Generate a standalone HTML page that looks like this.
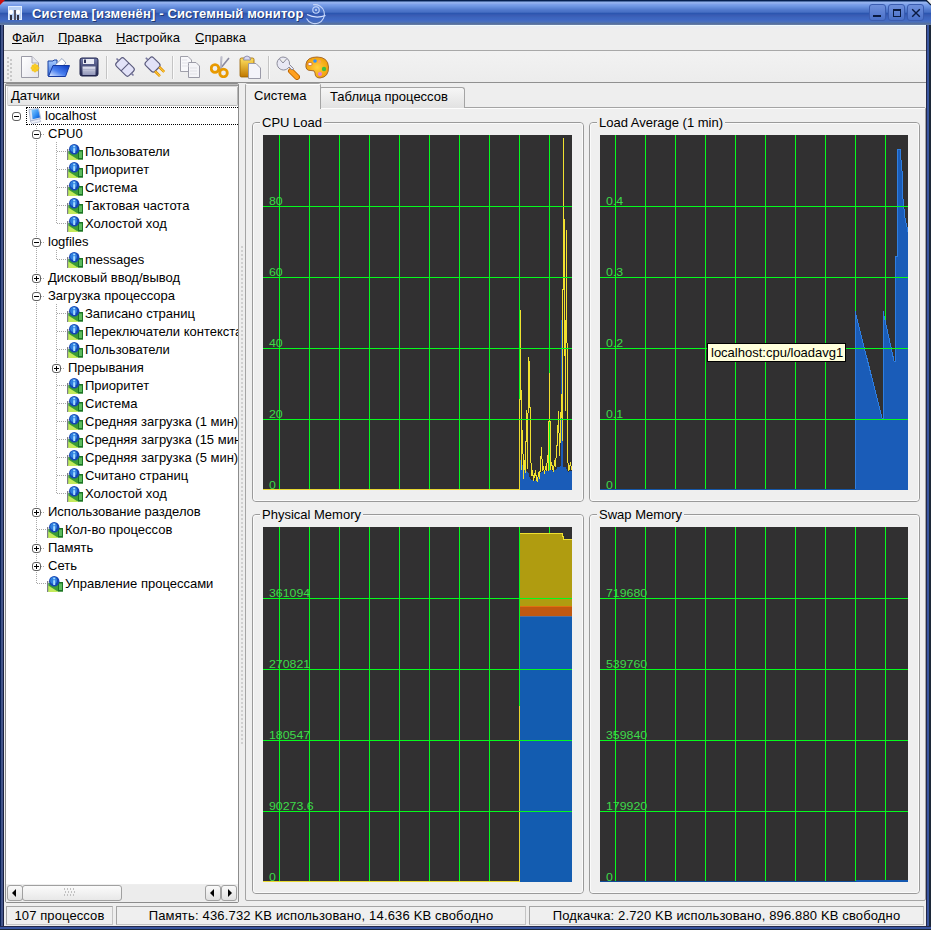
<!DOCTYPE html>
<html><head><meta charset="utf-8"><title>ksysguard</title>
<style>
*{box-sizing:border-box}
html,body{margin:0;padding:0}
body{width:931px;height:930px;overflow:hidden;position:relative;background:#1b3c8c;font-family:"Liberation Sans",sans-serif;font-size:13px;color:#000}
.a{position:absolute}
.t{position:absolute;white-space:nowrap;line-height:16px}
</style></head><body>

<div class="a" style="left:0;top:0;width:931px;height:25px;background:linear-gradient(#062050 0px,#062050 1px,#5070a8 1px,#5070a8 2px,#98b4ee 2px,#8cacec 3.5px,#7da0ea 4.5px,#7098e4 6px,#6088d8 8px,#5078cc 10px,#4870c4 12px,#2c56b0 13.5px,#3a5cb4 15.5px,#3c64bc 17.5px,#4068c4 20px,#4a70bc 22px,#5570a0 23.5px,#6a80a8 25px);border-radius:5px 5px 0 0"></div>
<svg class="a" style="left:0;top:0" width="6" height="6"><path d="M0 0 H5 L0 5 Z" fill="#c81010"/></svg>
<svg class="a" style="left:925px;top:0" width="6" height="6"><path d="M1 0 H6 V5 Z" fill="#f0f0f0"/><path d="M1 0 L6 5" stroke="#0a1a30" stroke-width="1.2"/></svg>
<div class="a" style="left:8px;top:6px;width:14px;height:14px;background:#b8d0f4;border:1px solid #e0ecff"></div>
<svg class="a" style="left:7px;top:6px" width="15" height="15"><circle cx="4" cy="6" r="2.2" fill="#fff"/><circle cx="11" cy="6" r="2.2" fill="#fff"/><rect x="3" y="9" width="2" height="5" fill="#334"/><rect x="7" y="4" width="2" height="10" fill="#556"/><rect x="10" y="9" width="2" height="5" fill="#334"/></svg>
<div class="t" style="left:32px;top:6px;font-weight:bold;font-size:13px;color:#fff;text-shadow:1px 1px 0 #203870;letter-spacing:0.15px">Система [изменён] - Системный монитор</div>
<svg class="a" style="left:302px;top:2px" width="26" height="24"><path d="M11 2.8 A9.5 9.5 0 1 1 4.5 16.5" fill="none" stroke="#c4d4f8" stroke-width="1.1"/><circle cx="14" cy="8" r="3.2" fill="none" stroke="#c8d8fc" stroke-width="1.1"/><circle cx="14" cy="8" r="1" fill="#c8d8fc"/><path d="M5 12.5 Q14 17 23.5 13.5" fill="none" stroke="#d4e0ff" stroke-width="1.2"/></svg>
<div class="a" style="left:869px;top:4px;width:17px;height:17px;border:1px solid #3a5cb0;border-radius:3px;background:linear-gradient(#6f90dc,#4a70c8)"></div>
<div class="a" style="left:888px;top:4px;width:17px;height:17px;border:1px solid #3a5cb0;border-radius:3px;background:linear-gradient(#6f90dc,#4a70c8)"></div>
<div class="a" style="left:907px;top:4px;width:17px;height:17px;border:1px solid #3a5cb0;border-radius:3px;background:linear-gradient(#6f90dc,#4a70c8)"></div>
<div class="a" style="left:873px;top:15px;width:8px;height:2px;background:#0a1a40"></div>
<div class="a" style="left:893px;top:9px;width:8px;height:8px;border:1px solid #0a1a40;border-top-width:2px"></div>
<svg class="a" style="left:907px;top:4px" width="17" height="17"><path d="M5.2 5.2 L12.8 12.8 M12.8 5.2 L5.2 12.8" stroke="#0a1a40" stroke-width="1.4"/></svg>
<div class="a" style="left:0;top:25px;width:4px;height:905px;background:linear-gradient(90deg,#0a2258 0 1px,#42548a 1px 3px,#1a2040 3px 4px)"></div>
<div class="a" style="left:926px;top:25px;width:5px;height:905px;background:linear-gradient(90deg,#24284a 0 1px,#3a56a0 1px 3px,#1c2838 3px 5px)"></div>
<div class="a" style="left:0;top:926px;width:931px;height:4px;background:linear-gradient(#24284a 0 1px,#3a56a0 1px 3px,#1c2838 3px 4px)"></div>
<div class="a" style="left:4px;top:25px;width:922px;height:901px;background:#eeeeee"></div>
<div class="a" style="left:4px;top:25px;width:922px;height:25px;background:linear-gradient(#f0fbff 0px,#f0fbff 1px,#e8ecf4 1px,#eeeeee 4px,#eeeeee)"></div>
<div class="a" style="left:4px;top:50px;width:922px;height:1px;background:#a8a8a8"></div>
<div class="t" style="left:12px;top:30px">Файл</div>
<div class="a" style="left:12px;top:43px;width:10px;height:1px;background:#000"></div>
<div class="t" style="left:58px;top:30px">Правка</div>
<div class="a" style="left:58px;top:43px;width:9px;height:1px;background:#000"></div>
<div class="t" style="left:116px;top:30px">Настройка</div>
<div class="a" style="left:116px;top:43px;width:10px;height:1px;background:#000"></div>
<div class="t" style="left:195px;top:30px">Справка</div>
<div class="a" style="left:195px;top:43px;width:9px;height:1px;background:#000"></div>
<div class="a" style="left:4px;top:51px;width:922px;height:32px;background:linear-gradient(#f2f2f2,#ececec)"></div>
<div class="a" style="left:4px;top:82px;width:922px;height:1px;background:#909090"></div>
<div class="a" style="left:7px;top:57px;width:2px;height:2px;background:#c8c8c8"></div>
<div class="a" style="left:10px;top:59px;width:2px;height:2px;background:#c8c8c8"></div>
<div class="a" style="left:7px;top:61px;width:2px;height:2px;background:#c8c8c8"></div>
<div class="a" style="left:10px;top:63px;width:2px;height:2px;background:#c8c8c8"></div>
<div class="a" style="left:7px;top:65px;width:2px;height:2px;background:#c8c8c8"></div>
<div class="a" style="left:10px;top:67px;width:2px;height:2px;background:#c8c8c8"></div>
<div class="a" style="left:7px;top:69px;width:2px;height:2px;background:#c8c8c8"></div>
<div class="a" style="left:10px;top:71px;width:2px;height:2px;background:#c8c8c8"></div>
<div class="a" style="left:7px;top:73px;width:2px;height:2px;background:#c8c8c8"></div>
<div class="a" style="left:10px;top:75px;width:2px;height:2px;background:#c8c8c8"></div>
<div class="a" style="left:7px;top:77px;width:2px;height:2px;background:#c8c8c8"></div>
<div class="a" style="left:10px;top:79px;width:2px;height:2px;background:#c8c8c8"></div>
<div class="a" style="left:106px;top:56px;width:1px;height:23px;background:#c4c4c4"></div>
<div class="a" style="left:107px;top:56px;width:1px;height:23px;background:#fafafa"></div>
<div class="a" style="left:172px;top:56px;width:1px;height:23px;background:#c4c4c4"></div>
<div class="a" style="left:173px;top:56px;width:1px;height:23px;background:#fafafa"></div>
<div class="a" style="left:268px;top:56px;width:1px;height:23px;background:#c4c4c4"></div>
<div class="a" style="left:269px;top:56px;width:1px;height:23px;background:#fafafa"></div>
<svg class="a" style="left:20px;top:56px" width="22" height="23" viewBox="0 0 22 23"><defs><linearGradient id="pg" x1="0" y1="0" x2="1" y2="1"><stop offset="0" stop-color="#fff"/><stop offset="1" stop-color="#e4e4ec"/></linearGradient></defs><path d="M1.5 0.5 H12 L18.5 7 V21.5 H1.5 Z" fill="url(#pg)" stroke="#9a9aa6"/><path d="M12 0.5 V7 H18.5" fill="#e8e8f0" stroke="#a8a8b4"/><circle cx="15" cy="12" r="3.4" fill="#ffe040" stroke="#e8b010" stroke-width="0.8"/><path d="M15 7.5 V16.5 M10.5 12 H19.5 M12 9 L18 15 M18 9 L12 15" stroke="#f8c820" stroke-width="1.1"/></svg>
<svg class="a" style="left:47px;top:57px" width="24" height="21" viewBox="0 0 24 21"><defs><linearGradient id="fo" x1="0" y1="1" x2="1" y2="0"><stop offset="0" stop-color="#e8f0ff"/><stop offset="0.45" stop-color="#4a80f0"/><stop offset="1" stop-color="#0838c0"/></linearGradient><linearGradient id="fb" x1="0" y1="0" x2="0" y2="1"><stop offset="0" stop-color="#a8ccff"/><stop offset="1" stop-color="#3870e0"/></linearGradient></defs><path d="M1 4 H6 L7 3 H10 V19 H1 Z" fill="url(#fb)" stroke="#1840a0"/><path d="M5 11 L15 1.5 L19 6 L10 14 Z" fill="#fff" stroke="#8090b0" stroke-width="0.8"/><path d="M1.5 19.5 L6 8.5 H22.5 L18.5 19.5 Z" fill="url(#fo)" stroke="#1438a0"/></svg>
<svg class="a" style="left:79px;top:57px" width="20" height="20" viewBox="0 0 20 20"><defs><linearGradient id="fl" x1="0" y1="0" x2="0" y2="1"><stop offset="0" stop-color="#7078a8"/><stop offset="1" stop-color="#20244c"/></linearGradient><linearGradient id="fl2" x1="0" y1="0" x2="0" y2="1"><stop offset="0" stop-color="#e0e2f0"/><stop offset="1" stop-color="#9094b8"/></linearGradient></defs><rect x="1" y="1" width="18" height="18" rx="2" fill="url(#fl)" stroke="#20244c"/><rect x="4" y="2" width="11" height="5" fill="#e8eaf4"/><rect x="5" y="2.5" width="2" height="3.5" fill="#30345c"/><rect x="3.5" y="9.5" width="13" height="8.5" fill="url(#fl2)"/><path d="M4 12.5 H16 M4 15 H16" stroke="#a0a4c0" stroke-width="0.6"/></svg>
<svg class="a" style="left:113px;top:55px" width="24" height="24" viewBox="0 0 24 24"><g transform="rotate(-45 12 12)"><rect x="6.5" y="3" width="11" height="18" rx="2.5" fill="#e2e2f8" stroke="#5a5a7c" stroke-width="1.1"/><path d="M6.5 12 H17.5" stroke="#5a5a7c" stroke-width="1.1"/><path d="M12 3 V0 M12 21 V24" stroke="#7a7aa0" stroke-width="1.6"/></g></svg>
<svg class="a" style="left:143px;top:55px" width="24" height="24" viewBox="0 0 24 24"><g transform="rotate(-45 12 12)"><rect x="6.5" y="2" width="11" height="13" rx="2.5" fill="#e2e2f8" stroke="#5a5a7c" stroke-width="1.1"/><path d="M12 2 V-1" stroke="#7a7aa0" stroke-width="1.6"/><path d="M9 15 V22 M15 15 V22" stroke="#e09000" stroke-width="2.6"/><path d="M9 15 V22 M15 15 V22" stroke="#ffd040" stroke-width="1"/></g></svg>
<svg class="a" style="left:180px;top:56px" width="22" height="23" viewBox="0 0 22 23"><path d="M0.5 0.5 H8 L11.5 4 V15.5 H0.5 Z" fill="#f8f8fb" stroke="#a0a0aa"/><path d="M8.5 6.5 H16 L19.5 10 V21.5 H8.5 Z" fill="#f4f4f8" stroke="#9a9aa6"/><path d="M2 4 H7 M2 7 H9 M2 10 H9 M10 12 H17 M10 15 H17 M10 18 H17" stroke="#d8d8e0" stroke-width="0.7"/></svg>
<svg class="a" style="left:210px;top:56px" width="21" height="22" viewBox="0 0 21 22"><path d="M11 14 L11.5 0.5 M10 13 L19 2" stroke="#8a8aa0" stroke-width="1.6"/><path d="M11 14 L11.5 0.5" stroke="#e8e8f0" stroke-width="0.6"/><circle cx="5" cy="12.5" r="3.8" fill="none" stroke="#e89a00" stroke-width="2.8"/><circle cx="13.5" cy="17" r="3.8" fill="none" stroke="#e89a00" stroke-width="2.8"/><path d="M8 13.5 L11 14.5" stroke="#e89a00" stroke-width="2.5"/></svg>
<svg class="a" style="left:239px;top:55px" width="23" height="25" viewBox="0 0 23 25"><defs><linearGradient id="cb" x1="0" y1="0" x2="0" y2="1"><stop offset="0" stop-color="#ffe060"/><stop offset="1" stop-color="#c07800"/></linearGradient></defs><rect x="1" y="3" width="14" height="19" rx="1.5" fill="url(#cb)" stroke="#986000" stroke-width="0.8"/><path d="M4.5 5 Q4.5 1 8 1 Q11.5 1 11.5 5 Z" fill="#d8d8f0" stroke="#8080a0" stroke-width="0.8"/><path d="M9.5 8.5 H17 L21.5 13 V23.5 H9.5 Z" fill="#f4f4fa" stroke="#9a9aa8"/></svg>
<svg class="a" style="left:274px;top:55px" width="26" height="25" viewBox="0 0 26 25"><path d="M17 16 L23 22" stroke="#c06800" stroke-width="6" stroke-linecap="round"/><path d="M17 16 L23 22" stroke="#ffa020" stroke-width="4" stroke-linecap="round"/><path d="M9 2 A6.5 6.5 0 1 0 15 12 L18 15 L19.5 13.5 L15.5 9.5 A6.5 6.5 0 0 0 9 2 Z" fill="#e8e8f4" stroke="#808090" stroke-width="0.9"/><path d="M5.5 4 L9 8 L12.5 4" fill="#eeeeee" stroke="#808090" stroke-width="0.9"/></svg>
<svg class="a" style="left:303px;top:55px" width="28" height="25" viewBox="0 0 28 25"><defs><radialGradient id="pal" cx="0.5" cy="0.5" r="0.6"><stop offset="0" stop-color="#ffd040"/><stop offset="1" stop-color="#f09800"/></radialGradient></defs><path d="M3 9 Q4 2 14 2 Q25 2 25.5 12 Q26 22 17 23 Q12 23 12 18 Q12 15 8 15.5 Q2 16 3 9 Z" fill="url(#pal)" stroke="#a06020" stroke-width="0.9"/><ellipse cx="7" cy="9" rx="2.2" ry="1.6" fill="#fff" stroke="#c06040" stroke-width="0.7"/><circle cx="12" cy="6" r="1.8" fill="#3090ff"/><circle cx="16.5" cy="6.5" r="1.5" fill="#ffa060"/><circle cx="21" cy="14" r="2.2" fill="#40c040"/><circle cx="17" cy="19" r="2" fill="#e080e0"/></svg>
<div class="a" style="left:5px;top:83px;width:234px;height:820px;border:1px solid #8c8c8c;border-radius:2px;background:#fff"></div>
<div class="a" style="left:6px;top:84px;width:232px;height:1px;background:#bcbcbc"></div><div class="a" style="left:6px;top:85px;width:232px;height:1px;background:#969696"></div>
<div class="a" style="left:7px;top:86px;width:231px;height:20px;background:linear-gradient(#f8f8f8,#e6e6e6);border:1px solid #b8b8b8;border-top-color:#d8d8d8;border-left-color:#d8d8d8;border-radius:2px"></div>
<div class="t" style="left:11px;top:88px">Датчики</div>
<div class="a" style="left:6px;top:106px;width:232px;height:778px;overflow:hidden">
<div class="a" style="left:30px;top:20px;width:1px;height:458px;background:repeating-linear-gradient(180deg,#a8a8a8 0 1px,transparent 1px 2px)"></div>
<div class="a" style="left:50px;top:36px;width:1px;height:82px;background:repeating-linear-gradient(180deg,#a8a8a8 0 1px,transparent 1px 2px)"></div>
<div class="a" style="left:50px;top:144px;width:1px;height:10px;background:repeating-linear-gradient(180deg,#a8a8a8 0 1px,transparent 1px 2px)"></div>
<div class="a" style="left:50px;top:198px;width:1px;height:190px;background:repeating-linear-gradient(180deg,#a8a8a8 0 1px,transparent 1px 2px)"></div>
<div class="a" style="left:6px;top:6px;width:9px;height:9px;border:1px solid #606060;border-radius:3px;background:#fff"></div>
<div class="a" style="left:8px;top:10px;width:5px;height:1px;background:#000"></div>
<svg class="a" style="left:22px;top:2px" width="14" height="16"><defs><linearGradient id="hg" x1="0" y1="0" x2="1" y2="1"><stop offset="0" stop-color="#8ad0ff"/><stop offset="0.6" stop-color="#2a88f0"/><stop offset="1" stop-color="#0a50c8"/></linearGradient></defs><path d="M1 1.5 L10.5 0.5 L12.8 10.5 L2.5 13 Z" fill="#dfe6f4" stroke="#a4aec8" stroke-width="0.8"/><path d="M3.5 1.8 L10.2 1.2 L12 9.6 L4.6 11.2 Z" fill="url(#hg)"/><path d="M2.2 13.2 L11.5 11 L12.8 13.6 L4 15.6 Z" fill="#eef1fa" stroke="#a8b0c8" stroke-width="0.7"/></svg>
<div class="t" style="left:39px;top:1px;line-height:18px">localhost</div>
<div class="a" style="left:20px;top:1px;width:240px;height:18px;border:1px dotted #000"></div>
<div class="a" style="left:26px;top:24px;width:9px;height:9px;border:1px solid #606060;border-radius:3px;background:#fff"></div>
<div class="a" style="left:28px;top:28px;width:5px;height:1px;background:#000"></div>
<div class="a" style="left:35px;top:28px;width:4px;height:1px;background:repeating-linear-gradient(90deg,#a8a8a8 0 1px,transparent 1px 2px)"></div>
<div class="t" style="left:42px;top:19px;line-height:18px">CPU0</div>
<div class="a" style="left:51px;top:45px;width:10px;height:1px;background:repeating-linear-gradient(90deg,#a8a8a8 0 1px,transparent 1px 2px)"></div>
<svg class="a" style="left:61px;top:38px" width="16" height="16"><rect x="0" y="5" width="1.3" height="11" fill="#7c7c88"/><path d="M1.3 7 H16 V15.5 H1.3 Z" fill="#3c9c34"/><path d="M1.3 9.5 L11.5 16 H1.3 Z" fill="#c4ea5c"/><rect x="11" y="6" width="5" height="9.5" fill="#1c7424"/><rect x="12" y="7.5" width="3" height="6.5" fill="#5cbc5c"/><circle cx="7.2" cy="5.3" r="5.2" fill="#1446b4"/><circle cx="6.6" cy="4.4" r="3.4" fill="#2f80e0"/><rect x="6.2" y="4.2" width="2" height="4.8" fill="#a8dcff"/><rect x="6.2" y="1.6" width="2" height="1.7" fill="#a8dcff"/></svg>
<div class="t" style="left:79px;top:37px;line-height:18px">Пользователи</div>
<div class="a" style="left:51px;top:63px;width:10px;height:1px;background:repeating-linear-gradient(90deg,#a8a8a8 0 1px,transparent 1px 2px)"></div>
<svg class="a" style="left:61px;top:56px" width="16" height="16"><rect x="0" y="5" width="1.3" height="11" fill="#7c7c88"/><path d="M1.3 7 H16 V15.5 H1.3 Z" fill="#3c9c34"/><path d="M1.3 9.5 L11.5 16 H1.3 Z" fill="#c4ea5c"/><rect x="11" y="6" width="5" height="9.5" fill="#1c7424"/><rect x="12" y="7.5" width="3" height="6.5" fill="#5cbc5c"/><circle cx="7.2" cy="5.3" r="5.2" fill="#1446b4"/><circle cx="6.6" cy="4.4" r="3.4" fill="#2f80e0"/><rect x="6.2" y="4.2" width="2" height="4.8" fill="#a8dcff"/><rect x="6.2" y="1.6" width="2" height="1.7" fill="#a8dcff"/></svg>
<div class="t" style="left:79px;top:55px;line-height:18px">Приоритет</div>
<div class="a" style="left:51px;top:81px;width:10px;height:1px;background:repeating-linear-gradient(90deg,#a8a8a8 0 1px,transparent 1px 2px)"></div>
<svg class="a" style="left:61px;top:74px" width="16" height="16"><rect x="0" y="5" width="1.3" height="11" fill="#7c7c88"/><path d="M1.3 7 H16 V15.5 H1.3 Z" fill="#3c9c34"/><path d="M1.3 9.5 L11.5 16 H1.3 Z" fill="#c4ea5c"/><rect x="11" y="6" width="5" height="9.5" fill="#1c7424"/><rect x="12" y="7.5" width="3" height="6.5" fill="#5cbc5c"/><circle cx="7.2" cy="5.3" r="5.2" fill="#1446b4"/><circle cx="6.6" cy="4.4" r="3.4" fill="#2f80e0"/><rect x="6.2" y="4.2" width="2" height="4.8" fill="#a8dcff"/><rect x="6.2" y="1.6" width="2" height="1.7" fill="#a8dcff"/></svg>
<div class="t" style="left:79px;top:73px;line-height:18px">Система</div>
<div class="a" style="left:51px;top:99px;width:10px;height:1px;background:repeating-linear-gradient(90deg,#a8a8a8 0 1px,transparent 1px 2px)"></div>
<svg class="a" style="left:61px;top:92px" width="16" height="16"><rect x="0" y="5" width="1.3" height="11" fill="#7c7c88"/><path d="M1.3 7 H16 V15.5 H1.3 Z" fill="#3c9c34"/><path d="M1.3 9.5 L11.5 16 H1.3 Z" fill="#c4ea5c"/><rect x="11" y="6" width="5" height="9.5" fill="#1c7424"/><rect x="12" y="7.5" width="3" height="6.5" fill="#5cbc5c"/><circle cx="7.2" cy="5.3" r="5.2" fill="#1446b4"/><circle cx="6.6" cy="4.4" r="3.4" fill="#2f80e0"/><rect x="6.2" y="4.2" width="2" height="4.8" fill="#a8dcff"/><rect x="6.2" y="1.6" width="2" height="1.7" fill="#a8dcff"/></svg>
<div class="t" style="left:79px;top:91px;line-height:18px">Тактовая частота</div>
<div class="a" style="left:51px;top:117px;width:10px;height:1px;background:repeating-linear-gradient(90deg,#a8a8a8 0 1px,transparent 1px 2px)"></div>
<svg class="a" style="left:61px;top:110px" width="16" height="16"><rect x="0" y="5" width="1.3" height="11" fill="#7c7c88"/><path d="M1.3 7 H16 V15.5 H1.3 Z" fill="#3c9c34"/><path d="M1.3 9.5 L11.5 16 H1.3 Z" fill="#c4ea5c"/><rect x="11" y="6" width="5" height="9.5" fill="#1c7424"/><rect x="12" y="7.5" width="3" height="6.5" fill="#5cbc5c"/><circle cx="7.2" cy="5.3" r="5.2" fill="#1446b4"/><circle cx="6.6" cy="4.4" r="3.4" fill="#2f80e0"/><rect x="6.2" y="4.2" width="2" height="4.8" fill="#a8dcff"/><rect x="6.2" y="1.6" width="2" height="1.7" fill="#a8dcff"/></svg>
<div class="t" style="left:79px;top:109px;line-height:18px">Холостой ход</div>
<div class="a" style="left:26px;top:132px;width:9px;height:9px;border:1px solid #606060;border-radius:3px;background:#fff"></div>
<div class="a" style="left:28px;top:136px;width:5px;height:1px;background:#000"></div>
<div class="a" style="left:35px;top:136px;width:4px;height:1px;background:repeating-linear-gradient(90deg,#a8a8a8 0 1px,transparent 1px 2px)"></div>
<div class="t" style="left:42px;top:127px;line-height:18px">logfiles</div>
<div class="a" style="left:51px;top:153px;width:10px;height:1px;background:repeating-linear-gradient(90deg,#a8a8a8 0 1px,transparent 1px 2px)"></div>
<svg class="a" style="left:61px;top:146px" width="16" height="16"><rect x="0" y="5" width="1.3" height="11" fill="#7c7c88"/><path d="M1.3 7 H16 V15.5 H1.3 Z" fill="#3c9c34"/><path d="M1.3 9.5 L11.5 16 H1.3 Z" fill="#c4ea5c"/><rect x="11" y="6" width="5" height="9.5" fill="#1c7424"/><rect x="12" y="7.5" width="3" height="6.5" fill="#5cbc5c"/><circle cx="7.2" cy="5.3" r="5.2" fill="#1446b4"/><circle cx="6.6" cy="4.4" r="3.4" fill="#2f80e0"/><rect x="6.2" y="4.2" width="2" height="4.8" fill="#a8dcff"/><rect x="6.2" y="1.6" width="2" height="1.7" fill="#a8dcff"/></svg>
<div class="t" style="left:79px;top:145px;line-height:18px">messages</div>
<div class="a" style="left:26px;top:168px;width:9px;height:9px;border:1px solid #606060;border-radius:3px;background:#fff"></div>
<div class="a" style="left:28px;top:172px;width:5px;height:1px;background:#000"></div>
<div class="a" style="left:30px;top:170px;width:1px;height:5px;background:#000"></div>
<div class="a" style="left:35px;top:172px;width:4px;height:1px;background:repeating-linear-gradient(90deg,#a8a8a8 0 1px,transparent 1px 2px)"></div>
<div class="t" style="left:42px;top:163px;line-height:18px">Дисковый ввод/вывод</div>
<div class="a" style="left:26px;top:186px;width:9px;height:9px;border:1px solid #606060;border-radius:3px;background:#fff"></div>
<div class="a" style="left:28px;top:190px;width:5px;height:1px;background:#000"></div>
<div class="a" style="left:35px;top:190px;width:4px;height:1px;background:repeating-linear-gradient(90deg,#a8a8a8 0 1px,transparent 1px 2px)"></div>
<div class="t" style="left:42px;top:181px;line-height:18px">Загрузка процессора</div>
<div class="a" style="left:51px;top:207px;width:10px;height:1px;background:repeating-linear-gradient(90deg,#a8a8a8 0 1px,transparent 1px 2px)"></div>
<svg class="a" style="left:61px;top:200px" width="16" height="16"><rect x="0" y="5" width="1.3" height="11" fill="#7c7c88"/><path d="M1.3 7 H16 V15.5 H1.3 Z" fill="#3c9c34"/><path d="M1.3 9.5 L11.5 16 H1.3 Z" fill="#c4ea5c"/><rect x="11" y="6" width="5" height="9.5" fill="#1c7424"/><rect x="12" y="7.5" width="3" height="6.5" fill="#5cbc5c"/><circle cx="7.2" cy="5.3" r="5.2" fill="#1446b4"/><circle cx="6.6" cy="4.4" r="3.4" fill="#2f80e0"/><rect x="6.2" y="4.2" width="2" height="4.8" fill="#a8dcff"/><rect x="6.2" y="1.6" width="2" height="1.7" fill="#a8dcff"/></svg>
<div class="t" style="left:79px;top:199px;line-height:18px">Записано страниц</div>
<div class="a" style="left:51px;top:225px;width:10px;height:1px;background:repeating-linear-gradient(90deg,#a8a8a8 0 1px,transparent 1px 2px)"></div>
<svg class="a" style="left:61px;top:218px" width="16" height="16"><rect x="0" y="5" width="1.3" height="11" fill="#7c7c88"/><path d="M1.3 7 H16 V15.5 H1.3 Z" fill="#3c9c34"/><path d="M1.3 9.5 L11.5 16 H1.3 Z" fill="#c4ea5c"/><rect x="11" y="6" width="5" height="9.5" fill="#1c7424"/><rect x="12" y="7.5" width="3" height="6.5" fill="#5cbc5c"/><circle cx="7.2" cy="5.3" r="5.2" fill="#1446b4"/><circle cx="6.6" cy="4.4" r="3.4" fill="#2f80e0"/><rect x="6.2" y="4.2" width="2" height="4.8" fill="#a8dcff"/><rect x="6.2" y="1.6" width="2" height="1.7" fill="#a8dcff"/></svg>
<div class="t" style="left:79px;top:217px;line-height:18px">Переключатели контекста</div>
<div class="a" style="left:51px;top:243px;width:10px;height:1px;background:repeating-linear-gradient(90deg,#a8a8a8 0 1px,transparent 1px 2px)"></div>
<svg class="a" style="left:61px;top:236px" width="16" height="16"><rect x="0" y="5" width="1.3" height="11" fill="#7c7c88"/><path d="M1.3 7 H16 V15.5 H1.3 Z" fill="#3c9c34"/><path d="M1.3 9.5 L11.5 16 H1.3 Z" fill="#c4ea5c"/><rect x="11" y="6" width="5" height="9.5" fill="#1c7424"/><rect x="12" y="7.5" width="3" height="6.5" fill="#5cbc5c"/><circle cx="7.2" cy="5.3" r="5.2" fill="#1446b4"/><circle cx="6.6" cy="4.4" r="3.4" fill="#2f80e0"/><rect x="6.2" y="4.2" width="2" height="4.8" fill="#a8dcff"/><rect x="6.2" y="1.6" width="2" height="1.7" fill="#a8dcff"/></svg>
<div class="t" style="left:79px;top:235px;line-height:18px">Пользователи</div>
<div class="a" style="left:46px;top:258px;width:9px;height:9px;border:1px solid #606060;border-radius:3px;background:#fff"></div>
<div class="a" style="left:48px;top:262px;width:5px;height:1px;background:#000"></div>
<div class="a" style="left:50px;top:260px;width:1px;height:5px;background:#000"></div>
<div class="a" style="left:55px;top:262px;width:4px;height:1px;background:repeating-linear-gradient(90deg,#a8a8a8 0 1px,transparent 1px 2px)"></div>
<div class="t" style="left:62px;top:253px;line-height:18px">Прерывания</div>
<div class="a" style="left:51px;top:279px;width:10px;height:1px;background:repeating-linear-gradient(90deg,#a8a8a8 0 1px,transparent 1px 2px)"></div>
<svg class="a" style="left:61px;top:272px" width="16" height="16"><rect x="0" y="5" width="1.3" height="11" fill="#7c7c88"/><path d="M1.3 7 H16 V15.5 H1.3 Z" fill="#3c9c34"/><path d="M1.3 9.5 L11.5 16 H1.3 Z" fill="#c4ea5c"/><rect x="11" y="6" width="5" height="9.5" fill="#1c7424"/><rect x="12" y="7.5" width="3" height="6.5" fill="#5cbc5c"/><circle cx="7.2" cy="5.3" r="5.2" fill="#1446b4"/><circle cx="6.6" cy="4.4" r="3.4" fill="#2f80e0"/><rect x="6.2" y="4.2" width="2" height="4.8" fill="#a8dcff"/><rect x="6.2" y="1.6" width="2" height="1.7" fill="#a8dcff"/></svg>
<div class="t" style="left:79px;top:271px;line-height:18px">Приоритет</div>
<div class="a" style="left:51px;top:297px;width:10px;height:1px;background:repeating-linear-gradient(90deg,#a8a8a8 0 1px,transparent 1px 2px)"></div>
<svg class="a" style="left:61px;top:290px" width="16" height="16"><rect x="0" y="5" width="1.3" height="11" fill="#7c7c88"/><path d="M1.3 7 H16 V15.5 H1.3 Z" fill="#3c9c34"/><path d="M1.3 9.5 L11.5 16 H1.3 Z" fill="#c4ea5c"/><rect x="11" y="6" width="5" height="9.5" fill="#1c7424"/><rect x="12" y="7.5" width="3" height="6.5" fill="#5cbc5c"/><circle cx="7.2" cy="5.3" r="5.2" fill="#1446b4"/><circle cx="6.6" cy="4.4" r="3.4" fill="#2f80e0"/><rect x="6.2" y="4.2" width="2" height="4.8" fill="#a8dcff"/><rect x="6.2" y="1.6" width="2" height="1.7" fill="#a8dcff"/></svg>
<div class="t" style="left:79px;top:289px;line-height:18px">Система</div>
<div class="a" style="left:51px;top:315px;width:10px;height:1px;background:repeating-linear-gradient(90deg,#a8a8a8 0 1px,transparent 1px 2px)"></div>
<svg class="a" style="left:61px;top:308px" width="16" height="16"><rect x="0" y="5" width="1.3" height="11" fill="#7c7c88"/><path d="M1.3 7 H16 V15.5 H1.3 Z" fill="#3c9c34"/><path d="M1.3 9.5 L11.5 16 H1.3 Z" fill="#c4ea5c"/><rect x="11" y="6" width="5" height="9.5" fill="#1c7424"/><rect x="12" y="7.5" width="3" height="6.5" fill="#5cbc5c"/><circle cx="7.2" cy="5.3" r="5.2" fill="#1446b4"/><circle cx="6.6" cy="4.4" r="3.4" fill="#2f80e0"/><rect x="6.2" y="4.2" width="2" height="4.8" fill="#a8dcff"/><rect x="6.2" y="1.6" width="2" height="1.7" fill="#a8dcff"/></svg>
<div class="t" style="left:79px;top:307px;line-height:18px">Средняя загрузка (1 мин)</div>
<div class="a" style="left:51px;top:333px;width:10px;height:1px;background:repeating-linear-gradient(90deg,#a8a8a8 0 1px,transparent 1px 2px)"></div>
<svg class="a" style="left:61px;top:326px" width="16" height="16"><rect x="0" y="5" width="1.3" height="11" fill="#7c7c88"/><path d="M1.3 7 H16 V15.5 H1.3 Z" fill="#3c9c34"/><path d="M1.3 9.5 L11.5 16 H1.3 Z" fill="#c4ea5c"/><rect x="11" y="6" width="5" height="9.5" fill="#1c7424"/><rect x="12" y="7.5" width="3" height="6.5" fill="#5cbc5c"/><circle cx="7.2" cy="5.3" r="5.2" fill="#1446b4"/><circle cx="6.6" cy="4.4" r="3.4" fill="#2f80e0"/><rect x="6.2" y="4.2" width="2" height="4.8" fill="#a8dcff"/><rect x="6.2" y="1.6" width="2" height="1.7" fill="#a8dcff"/></svg>
<div class="t" style="left:79px;top:325px;line-height:18px">Средняя загрузка (15 мин)</div>
<div class="a" style="left:51px;top:351px;width:10px;height:1px;background:repeating-linear-gradient(90deg,#a8a8a8 0 1px,transparent 1px 2px)"></div>
<svg class="a" style="left:61px;top:344px" width="16" height="16"><rect x="0" y="5" width="1.3" height="11" fill="#7c7c88"/><path d="M1.3 7 H16 V15.5 H1.3 Z" fill="#3c9c34"/><path d="M1.3 9.5 L11.5 16 H1.3 Z" fill="#c4ea5c"/><rect x="11" y="6" width="5" height="9.5" fill="#1c7424"/><rect x="12" y="7.5" width="3" height="6.5" fill="#5cbc5c"/><circle cx="7.2" cy="5.3" r="5.2" fill="#1446b4"/><circle cx="6.6" cy="4.4" r="3.4" fill="#2f80e0"/><rect x="6.2" y="4.2" width="2" height="4.8" fill="#a8dcff"/><rect x="6.2" y="1.6" width="2" height="1.7" fill="#a8dcff"/></svg>
<div class="t" style="left:79px;top:343px;line-height:18px">Средняя загрузка (5 мин)</div>
<div class="a" style="left:51px;top:369px;width:10px;height:1px;background:repeating-linear-gradient(90deg,#a8a8a8 0 1px,transparent 1px 2px)"></div>
<svg class="a" style="left:61px;top:362px" width="16" height="16"><rect x="0" y="5" width="1.3" height="11" fill="#7c7c88"/><path d="M1.3 7 H16 V15.5 H1.3 Z" fill="#3c9c34"/><path d="M1.3 9.5 L11.5 16 H1.3 Z" fill="#c4ea5c"/><rect x="11" y="6" width="5" height="9.5" fill="#1c7424"/><rect x="12" y="7.5" width="3" height="6.5" fill="#5cbc5c"/><circle cx="7.2" cy="5.3" r="5.2" fill="#1446b4"/><circle cx="6.6" cy="4.4" r="3.4" fill="#2f80e0"/><rect x="6.2" y="4.2" width="2" height="4.8" fill="#a8dcff"/><rect x="6.2" y="1.6" width="2" height="1.7" fill="#a8dcff"/></svg>
<div class="t" style="left:79px;top:361px;line-height:18px">Считано страниц</div>
<div class="a" style="left:51px;top:387px;width:10px;height:1px;background:repeating-linear-gradient(90deg,#a8a8a8 0 1px,transparent 1px 2px)"></div>
<svg class="a" style="left:61px;top:380px" width="16" height="16"><rect x="0" y="5" width="1.3" height="11" fill="#7c7c88"/><path d="M1.3 7 H16 V15.5 H1.3 Z" fill="#3c9c34"/><path d="M1.3 9.5 L11.5 16 H1.3 Z" fill="#c4ea5c"/><rect x="11" y="6" width="5" height="9.5" fill="#1c7424"/><rect x="12" y="7.5" width="3" height="6.5" fill="#5cbc5c"/><circle cx="7.2" cy="5.3" r="5.2" fill="#1446b4"/><circle cx="6.6" cy="4.4" r="3.4" fill="#2f80e0"/><rect x="6.2" y="4.2" width="2" height="4.8" fill="#a8dcff"/><rect x="6.2" y="1.6" width="2" height="1.7" fill="#a8dcff"/></svg>
<div class="t" style="left:79px;top:379px;line-height:18px">Холостой ход</div>
<div class="a" style="left:26px;top:402px;width:9px;height:9px;border:1px solid #606060;border-radius:3px;background:#fff"></div>
<div class="a" style="left:28px;top:406px;width:5px;height:1px;background:#000"></div>
<div class="a" style="left:30px;top:404px;width:1px;height:5px;background:#000"></div>
<div class="a" style="left:35px;top:406px;width:4px;height:1px;background:repeating-linear-gradient(90deg,#a8a8a8 0 1px,transparent 1px 2px)"></div>
<div class="t" style="left:42px;top:397px;line-height:18px">Использование разделов</div>
<div class="a" style="left:31px;top:423px;width:10px;height:1px;background:repeating-linear-gradient(90deg,#a8a8a8 0 1px,transparent 1px 2px)"></div>
<svg class="a" style="left:41px;top:416px" width="16" height="16"><rect x="0" y="5" width="1.3" height="11" fill="#7c7c88"/><path d="M1.3 7 H16 V15.5 H1.3 Z" fill="#3c9c34"/><path d="M1.3 9.5 L11.5 16 H1.3 Z" fill="#c4ea5c"/><rect x="11" y="6" width="5" height="9.5" fill="#1c7424"/><rect x="12" y="7.5" width="3" height="6.5" fill="#5cbc5c"/><circle cx="7.2" cy="5.3" r="5.2" fill="#1446b4"/><circle cx="6.6" cy="4.4" r="3.4" fill="#2f80e0"/><rect x="6.2" y="4.2" width="2" height="4.8" fill="#a8dcff"/><rect x="6.2" y="1.6" width="2" height="1.7" fill="#a8dcff"/></svg>
<div class="t" style="left:59px;top:415px;line-height:18px">Кол-во процессов</div>
<div class="a" style="left:26px;top:438px;width:9px;height:9px;border:1px solid #606060;border-radius:3px;background:#fff"></div>
<div class="a" style="left:28px;top:442px;width:5px;height:1px;background:#000"></div>
<div class="a" style="left:30px;top:440px;width:1px;height:5px;background:#000"></div>
<div class="a" style="left:35px;top:442px;width:4px;height:1px;background:repeating-linear-gradient(90deg,#a8a8a8 0 1px,transparent 1px 2px)"></div>
<div class="t" style="left:42px;top:433px;line-height:18px">Память</div>
<div class="a" style="left:26px;top:456px;width:9px;height:9px;border:1px solid #606060;border-radius:3px;background:#fff"></div>
<div class="a" style="left:28px;top:460px;width:5px;height:1px;background:#000"></div>
<div class="a" style="left:30px;top:458px;width:1px;height:5px;background:#000"></div>
<div class="a" style="left:35px;top:460px;width:4px;height:1px;background:repeating-linear-gradient(90deg,#a8a8a8 0 1px,transparent 1px 2px)"></div>
<div class="t" style="left:42px;top:451px;line-height:18px">Сеть</div>
<div class="a" style="left:31px;top:477px;width:10px;height:1px;background:repeating-linear-gradient(90deg,#a8a8a8 0 1px,transparent 1px 2px)"></div>
<svg class="a" style="left:41px;top:470px" width="16" height="16"><rect x="0" y="5" width="1.3" height="11" fill="#7c7c88"/><path d="M1.3 7 H16 V15.5 H1.3 Z" fill="#3c9c34"/><path d="M1.3 9.5 L11.5 16 H1.3 Z" fill="#c4ea5c"/><rect x="11" y="6" width="5" height="9.5" fill="#1c7424"/><rect x="12" y="7.5" width="3" height="6.5" fill="#5cbc5c"/><circle cx="7.2" cy="5.3" r="5.2" fill="#1446b4"/><circle cx="6.6" cy="4.4" r="3.4" fill="#2f80e0"/><rect x="6.2" y="4.2" width="2" height="4.8" fill="#a8dcff"/><rect x="6.2" y="1.6" width="2" height="1.7" fill="#a8dcff"/></svg>
<div class="t" style="left:59px;top:469px;line-height:18px">Управление процессами</div>
</div>
<div class="a" style="left:6px;top:884px;width:232px;height:18px;background:#eeeeee"></div>
<div class="a" style="left:7px;top:885px;width:229px;height:16px;background:#ececec"></div>
<div class="a" style="left:7px;top:885px;width:16px;height:16px;border:1px solid #a0a0a0;border-radius:3px;background:linear-gradient(#fafafa,#e0e0e0)"></div>
<div class="a" style="left:12px;top:889px;width:0;height:0;border-top:4px solid transparent;border-bottom:4px solid transparent;border-right:4px solid #000"></div>
<div class="a" style="left:205px;top:885px;width:16px;height:16px;border:1px solid #a0a0a0;border-radius:3px;background:linear-gradient(#fafafa,#e0e0e0)"></div>
<div class="a" style="left:210px;top:889px;width:0;height:0;border-top:4px solid transparent;border-bottom:4px solid transparent;border-right:4px solid #000"></div>
<div class="a" style="left:221px;top:885px;width:16px;height:16px;border:1px solid #a0a0a0;border-radius:3px;background:linear-gradient(#fafafa,#e0e0e0)"></div>
<div class="a" style="left:228px;top:889px;width:0;height:0;border-top:4px solid transparent;border-bottom:4px solid transparent;border-left:4px solid #000"></div>
<div class="a" style="left:22px;top:885px;width:100px;height:16px;border:1px solid #a0a0a0;border-radius:3px;background:linear-gradient(#fbfbfb,#e8e8e8)"></div>
<div class="a" style="left:64px;top:888px;width:1px;height:2px;background:#c0c0c0"></div>
<div class="a" style="left:65px;top:891px;width:1px;height:2px;background:#c0c0c0"></div>
<div class="a" style="left:64px;top:894px;width:1px;height:2px;background:#c0c0c0"></div>
<div class="a" style="left:67px;top:888px;width:1px;height:2px;background:#c0c0c0"></div>
<div class="a" style="left:68px;top:891px;width:1px;height:2px;background:#c0c0c0"></div>
<div class="a" style="left:67px;top:894px;width:1px;height:2px;background:#c0c0c0"></div>
<div class="a" style="left:70px;top:888px;width:1px;height:2px;background:#c0c0c0"></div>
<div class="a" style="left:71px;top:891px;width:1px;height:2px;background:#c0c0c0"></div>
<div class="a" style="left:70px;top:894px;width:1px;height:2px;background:#c0c0c0"></div>
<div class="a" style="left:73px;top:888px;width:1px;height:2px;background:#c0c0c0"></div>
<div class="a" style="left:74px;top:891px;width:1px;height:2px;background:#c0c0c0"></div>
<div class="a" style="left:73px;top:894px;width:1px;height:2px;background:#c0c0c0"></div>
<div class="a" style="left:241px;top:246px;width:2px;height:2px;background:#d0d0d0"></div>
<div class="a" style="left:241px;top:250px;width:2px;height:2px;background:#d0d0d0"></div>
<div class="a" style="left:241px;top:254px;width:2px;height:2px;background:#d0d0d0"></div>
<div class="a" style="left:241px;top:258px;width:2px;height:2px;background:#d0d0d0"></div>
<div class="a" style="left:241px;top:262px;width:2px;height:2px;background:#d0d0d0"></div>
<div class="a" style="left:241px;top:266px;width:2px;height:2px;background:#d0d0d0"></div>
<div class="a" style="left:241px;top:270px;width:2px;height:2px;background:#d0d0d0"></div>
<div class="a" style="left:241px;top:274px;width:2px;height:2px;background:#d0d0d0"></div>
<div class="a" style="left:241px;top:278px;width:2px;height:2px;background:#d0d0d0"></div>
<div class="a" style="left:241px;top:282px;width:2px;height:2px;background:#d0d0d0"></div>
<div class="a" style="left:241px;top:286px;width:2px;height:2px;background:#d0d0d0"></div>
<div class="a" style="left:241px;top:290px;width:2px;height:2px;background:#d0d0d0"></div>
<div class="a" style="left:241px;top:294px;width:2px;height:2px;background:#d0d0d0"></div>
<div class="a" style="left:241px;top:298px;width:2px;height:2px;background:#d0d0d0"></div>
<div class="a" style="left:241px;top:302px;width:2px;height:2px;background:#d0d0d0"></div>
<div class="a" style="left:241px;top:306px;width:2px;height:2px;background:#d0d0d0"></div>
<div class="a" style="left:241px;top:310px;width:2px;height:2px;background:#d0d0d0"></div>
<div class="a" style="left:241px;top:314px;width:2px;height:2px;background:#d0d0d0"></div>
<div class="a" style="left:241px;top:318px;width:2px;height:2px;background:#d0d0d0"></div>
<div class="a" style="left:241px;top:322px;width:2px;height:2px;background:#d0d0d0"></div>
<div class="a" style="left:241px;top:326px;width:2px;height:2px;background:#d0d0d0"></div>
<div class="a" style="left:241px;top:330px;width:2px;height:2px;background:#d0d0d0"></div>
<div class="a" style="left:241px;top:334px;width:2px;height:2px;background:#d0d0d0"></div>
<div class="a" style="left:241px;top:338px;width:2px;height:2px;background:#d0d0d0"></div>
<div class="a" style="left:241px;top:342px;width:2px;height:2px;background:#d0d0d0"></div>
<div class="a" style="left:241px;top:346px;width:2px;height:2px;background:#d0d0d0"></div>
<div class="a" style="left:241px;top:350px;width:2px;height:2px;background:#d0d0d0"></div>
<div class="a" style="left:241px;top:354px;width:2px;height:2px;background:#d0d0d0"></div>
<div class="a" style="left:241px;top:358px;width:2px;height:2px;background:#d0d0d0"></div>
<div class="a" style="left:241px;top:362px;width:2px;height:2px;background:#d0d0d0"></div>
<div class="a" style="left:241px;top:366px;width:2px;height:2px;background:#d0d0d0"></div>
<div class="a" style="left:241px;top:370px;width:2px;height:2px;background:#d0d0d0"></div>
<div class="a" style="left:241px;top:374px;width:2px;height:2px;background:#d0d0d0"></div>
<div class="a" style="left:241px;top:378px;width:2px;height:2px;background:#d0d0d0"></div>
<div class="a" style="left:241px;top:382px;width:2px;height:2px;background:#d0d0d0"></div>
<div class="a" style="left:241px;top:386px;width:2px;height:2px;background:#d0d0d0"></div>
<div class="a" style="left:241px;top:390px;width:2px;height:2px;background:#d0d0d0"></div>
<div class="a" style="left:241px;top:394px;width:2px;height:2px;background:#d0d0d0"></div>
<div class="a" style="left:241px;top:398px;width:2px;height:2px;background:#d0d0d0"></div>
<div class="a" style="left:241px;top:402px;width:2px;height:2px;background:#d0d0d0"></div>
<div class="a" style="left:241px;top:406px;width:2px;height:2px;background:#d0d0d0"></div>
<div class="a" style="left:241px;top:410px;width:2px;height:2px;background:#d0d0d0"></div>
<div class="a" style="left:241px;top:414px;width:2px;height:2px;background:#d0d0d0"></div>
<div class="a" style="left:241px;top:418px;width:2px;height:2px;background:#d0d0d0"></div>
<div class="a" style="left:241px;top:422px;width:2px;height:2px;background:#d0d0d0"></div>
<div class="a" style="left:241px;top:426px;width:2px;height:2px;background:#d0d0d0"></div>
<div class="a" style="left:241px;top:430px;width:2px;height:2px;background:#d0d0d0"></div>
<div class="a" style="left:241px;top:434px;width:2px;height:2px;background:#d0d0d0"></div>
<div class="a" style="left:241px;top:438px;width:2px;height:2px;background:#d0d0d0"></div>
<div class="a" style="left:241px;top:442px;width:2px;height:2px;background:#d0d0d0"></div>
<div class="a" style="left:241px;top:446px;width:2px;height:2px;background:#d0d0d0"></div>
<div class="a" style="left:241px;top:450px;width:2px;height:2px;background:#d0d0d0"></div>
<div class="a" style="left:241px;top:454px;width:2px;height:2px;background:#d0d0d0"></div>
<div class="a" style="left:241px;top:458px;width:2px;height:2px;background:#d0d0d0"></div>
<div class="a" style="left:241px;top:462px;width:2px;height:2px;background:#d0d0d0"></div>
<div class="a" style="left:241px;top:466px;width:2px;height:2px;background:#d0d0d0"></div>
<div class="a" style="left:241px;top:470px;width:2px;height:2px;background:#d0d0d0"></div>
<div class="a" style="left:241px;top:474px;width:2px;height:2px;background:#d0d0d0"></div>
<div class="a" style="left:241px;top:478px;width:2px;height:2px;background:#d0d0d0"></div>
<div class="a" style="left:241px;top:482px;width:2px;height:2px;background:#d0d0d0"></div>
<div class="a" style="left:241px;top:486px;width:2px;height:2px;background:#d0d0d0"></div>
<div class="a" style="left:241px;top:490px;width:2px;height:2px;background:#d0d0d0"></div>
<div class="a" style="left:241px;top:494px;width:2px;height:2px;background:#d0d0d0"></div>
<div class="a" style="left:241px;top:498px;width:2px;height:2px;background:#d0d0d0"></div>
<div class="a" style="left:241px;top:502px;width:2px;height:2px;background:#d0d0d0"></div>
<div class="a" style="left:241px;top:506px;width:2px;height:2px;background:#d0d0d0"></div>
<div class="a" style="left:241px;top:510px;width:2px;height:2px;background:#d0d0d0"></div>
<div class="a" style="left:241px;top:514px;width:2px;height:2px;background:#d0d0d0"></div>
<div class="a" style="left:241px;top:518px;width:2px;height:2px;background:#d0d0d0"></div>
<div class="a" style="left:241px;top:522px;width:2px;height:2px;background:#d0d0d0"></div>
<div class="a" style="left:241px;top:526px;width:2px;height:2px;background:#d0d0d0"></div>
<div class="a" style="left:241px;top:530px;width:2px;height:2px;background:#d0d0d0"></div>
<div class="a" style="left:241px;top:534px;width:2px;height:2px;background:#d0d0d0"></div>
<div class="a" style="left:241px;top:538px;width:2px;height:2px;background:#d0d0d0"></div>
<div class="a" style="left:241px;top:542px;width:2px;height:2px;background:#d0d0d0"></div>
<div class="a" style="left:241px;top:546px;width:2px;height:2px;background:#d0d0d0"></div>
<div class="a" style="left:241px;top:550px;width:2px;height:2px;background:#d0d0d0"></div>
<div class="a" style="left:241px;top:554px;width:2px;height:2px;background:#d0d0d0"></div>
<div class="a" style="left:241px;top:558px;width:2px;height:2px;background:#d0d0d0"></div>
<div class="a" style="left:241px;top:562px;width:2px;height:2px;background:#d0d0d0"></div>
<div class="a" style="left:241px;top:566px;width:2px;height:2px;background:#d0d0d0"></div>
<div class="a" style="left:241px;top:570px;width:2px;height:2px;background:#d0d0d0"></div>
<div class="a" style="left:241px;top:574px;width:2px;height:2px;background:#d0d0d0"></div>
<div class="a" style="left:241px;top:578px;width:2px;height:2px;background:#d0d0d0"></div>
<div class="a" style="left:241px;top:582px;width:2px;height:2px;background:#d0d0d0"></div>
<div class="a" style="left:241px;top:586px;width:2px;height:2px;background:#d0d0d0"></div>
<div class="a" style="left:241px;top:590px;width:2px;height:2px;background:#d0d0d0"></div>
<div class="a" style="left:241px;top:594px;width:2px;height:2px;background:#d0d0d0"></div>
<div class="a" style="left:241px;top:598px;width:2px;height:2px;background:#d0d0d0"></div>
<div class="a" style="left:241px;top:602px;width:2px;height:2px;background:#d0d0d0"></div>
<div class="a" style="left:241px;top:606px;width:2px;height:2px;background:#d0d0d0"></div>
<div class="a" style="left:241px;top:610px;width:2px;height:2px;background:#d0d0d0"></div>
<div class="a" style="left:241px;top:614px;width:2px;height:2px;background:#d0d0d0"></div>
<div class="a" style="left:241px;top:618px;width:2px;height:2px;background:#d0d0d0"></div>
<div class="a" style="left:241px;top:622px;width:2px;height:2px;background:#d0d0d0"></div>
<div class="a" style="left:241px;top:626px;width:2px;height:2px;background:#d0d0d0"></div>
<div class="a" style="left:241px;top:630px;width:2px;height:2px;background:#d0d0d0"></div>
<div class="a" style="left:241px;top:634px;width:2px;height:2px;background:#d0d0d0"></div>
<div class="a" style="left:241px;top:638px;width:2px;height:2px;background:#d0d0d0"></div>
<div class="a" style="left:241px;top:642px;width:2px;height:2px;background:#d0d0d0"></div>
<div class="a" style="left:241px;top:646px;width:2px;height:2px;background:#d0d0d0"></div>
<div class="a" style="left:241px;top:650px;width:2px;height:2px;background:#d0d0d0"></div>
<div class="a" style="left:241px;top:654px;width:2px;height:2px;background:#d0d0d0"></div>
<div class="a" style="left:241px;top:658px;width:2px;height:2px;background:#d0d0d0"></div>
<div class="a" style="left:241px;top:662px;width:2px;height:2px;background:#d0d0d0"></div>
<div class="a" style="left:241px;top:666px;width:2px;height:2px;background:#d0d0d0"></div>
<div class="a" style="left:241px;top:670px;width:2px;height:2px;background:#d0d0d0"></div>
<div class="a" style="left:241px;top:674px;width:2px;height:2px;background:#d0d0d0"></div>
<div class="a" style="left:241px;top:678px;width:2px;height:2px;background:#d0d0d0"></div>
<div class="a" style="left:241px;top:682px;width:2px;height:2px;background:#d0d0d0"></div>
<div class="a" style="left:241px;top:686px;width:2px;height:2px;background:#d0d0d0"></div>
<div class="a" style="left:241px;top:690px;width:2px;height:2px;background:#d0d0d0"></div>
<div class="a" style="left:241px;top:694px;width:2px;height:2px;background:#d0d0d0"></div>
<div class="a" style="left:241px;top:698px;width:2px;height:2px;background:#d0d0d0"></div>
<div class="a" style="left:241px;top:702px;width:2px;height:2px;background:#d0d0d0"></div>
<div class="a" style="left:241px;top:706px;width:2px;height:2px;background:#d0d0d0"></div>
<div class="a" style="left:241px;top:710px;width:2px;height:2px;background:#d0d0d0"></div>
<div class="a" style="left:241px;top:714px;width:2px;height:2px;background:#d0d0d0"></div>
<div class="a" style="left:241px;top:718px;width:2px;height:2px;background:#d0d0d0"></div>
<div class="a" style="left:241px;top:722px;width:2px;height:2px;background:#d0d0d0"></div>
<div class="a" style="left:241px;top:726px;width:2px;height:2px;background:#d0d0d0"></div>
<div class="a" style="left:241px;top:730px;width:2px;height:2px;background:#d0d0d0"></div>
<div class="a" style="left:241px;top:734px;width:2px;height:2px;background:#d0d0d0"></div>
<div class="a" style="left:241px;top:738px;width:2px;height:2px;background:#d0d0d0"></div>
<div class="a" style="left:241px;top:742px;width:2px;height:2px;background:#d0d0d0"></div>
<div class="a" style="left:245px;top:107px;width:681px;height:794px;border:1px solid #a4a4a4;border-radius:2px;background:#efefef"></div>
<div class="a" style="left:246px;top:108px;width:679px;height:1px;background:#fdfdfd"></div>
<div class="a" style="left:319px;top:87px;width:146px;height:21px;border:1px solid #a4a4a4;border-bottom:none;border-radius:3px 3px 0 0;background:linear-gradient(#f6f6f6,#e2e2e2)"></div>
<div class="t" style="left:330px;top:89px">Таблица процессов</div>
<div class="a" style="left:245px;top:83px;width:76px;height:26px;border:1px solid #a4a4a4;border-bottom:none;border-radius:3px 3px 0 0;background:#efefef"></div>
<div class="a" style="left:246px;top:84px;width:74px;height:1px;background:#fdfdfd"></div>
<div class="t" style="left:254px;top:88px">Система</div>
<div class="a" style="left:252px;top:122px;width:332px;height:380px;border:1px solid #9a9a9a;border-radius:4px"></div>
<div class="a" style="left:253px;top:123px;width:330px;height:378px;border:1px solid #fafafa;border-radius:3px"></div>
<div class="t" style="left:260px;background:#efefef;padding:0 2px;left:260px;top:115px">CPU Load</div>
<div class="a" style="left:589px;top:122px;width:331px;height:380px;border:1px solid #9a9a9a;border-radius:4px"></div>
<div class="a" style="left:590px;top:123px;width:329px;height:378px;border:1px solid #fafafa;border-radius:3px"></div>
<div class="t" style="left:597px;background:#efefef;padding:0 2px;left:597px;top:115px">Load Average (1 min)</div>
<div class="a" style="left:252px;top:514px;width:332px;height:380px;border:1px solid #9a9a9a;border-radius:4px"></div>
<div class="a" style="left:253px;top:515px;width:330px;height:378px;border:1px solid #fafafa;border-radius:3px"></div>
<div class="t" style="left:260px;background:#efefef;padding:0 2px;left:260px;top:507px">Physical Memory</div>
<div class="a" style="left:589px;top:514px;width:331px;height:380px;border:1px solid #9a9a9a;border-radius:4px"></div>
<div class="a" style="left:590px;top:515px;width:329px;height:378px;border:1px solid #fafafa;border-radius:3px"></div>
<div class="t" style="left:597px;background:#efefef;padding:0 2px;left:597px;top:507px">Swap Memory</div>
<svg class="a" style="left:263px;top:135px" width="309" height="355" shape-rendering="crispEdges"><rect x="0" y="0" width="309" height="355" fill="#313031"/><rect x="16" y="0" width="1" height="355" fill="#04fb1d"/><rect x="46" y="0" width="1" height="355" fill="#04fb1d"/><rect x="76" y="0" width="1" height="355" fill="#04fb1d"/><rect x="106" y="0" width="1" height="355" fill="#04fb1d"/><rect x="136" y="0" width="1" height="355" fill="#04fb1d"/><rect x="166" y="0" width="1" height="355" fill="#04fb1d"/><rect x="196" y="0" width="1" height="355" fill="#04fb1d"/><rect x="226" y="0" width="1" height="355" fill="#04fb1d"/><rect x="256" y="0" width="1" height="355" fill="#04fb1d"/><rect x="286" y="0" width="1" height="355" fill="#04fb1d"/><polygon points="256,355 256,354 257,323 258,327 259,325 260,335 261,331 262,337 263,333 264,339 265,335 266,341 267,343 268,345 269,345 270,345 271,346 272,345 273,345 274,345 275,343 276,341 277,339 278,337 279,338 280,336 281,337 282,335 283,337 284,335 285,337 286,335 287,336 288,334 289,336 290,337 291,335 292,336 293,334 294,333 295,331 296,333 297,331 298,330 299,327 300,331 301,333 302,331 303,333 304,335 305,337 306,337 307,335 308,337 309,335 309,355" fill="#1a5cb8"/><rect x="298" y="185" width="2" height="170" fill="#1a5cb8"/><rect x="256" y="264" width="1" height="90" fill="#f0e030"/><rect x="257" y="175" width="1" height="90" fill="#f0e030"/><rect x="257" y="175" width="1" height="80" fill="#f0e030"/><rect x="258" y="255" width="1" height="80" fill="#f0e030"/><rect x="258" y="315" width="1" height="20" fill="#f0e030"/><rect x="259" y="295" width="1" height="20" fill="#f0e030"/><rect x="259" y="295" width="1" height="24" fill="#f0e030"/><rect x="260" y="319" width="1" height="24" fill="#f0e030"/><rect x="260" y="334" width="1" height="10" fill="#f0e030"/><rect x="261" y="325" width="1" height="10" fill="#f0e030"/><rect x="261" y="325" width="1" height="6" fill="#f0e030"/><rect x="262" y="331" width="1" height="6" fill="#f0e030"/><rect x="262" y="306" width="1" height="32" fill="#f0e030"/><rect x="263" y="275" width="1" height="32" fill="#f0e030"/><rect x="263" y="275" width="1" height="30" fill="#f0e030"/><rect x="264" y="304" width="1" height="30" fill="#f0e030"/><rect x="264" y="278" width="1" height="56" fill="#f0e030"/><rect x="265" y="222" width="1" height="56" fill="#f0e030"/><rect x="265" y="222" width="1" height="4" fill="#f0e030"/><rect x="266" y="226" width="1" height="4" fill="#f0e030"/><rect x="266" y="230" width="1" height="43" fill="#f0e030"/><rect x="267" y="272" width="1" height="43" fill="#f0e030"/><rect x="267" y="315" width="1" height="13" fill="#f0e030"/><rect x="268" y="328" width="1" height="13" fill="#f0e030"/><rect x="268" y="338" width="1" height="3" fill="#f0e030"/><rect x="269" y="335" width="1" height="3" fill="#f0e030"/><rect x="269" y="335" width="1" height="6" fill="#f0e030"/><rect x="270" y="340" width="1" height="6" fill="#f0e030"/><rect x="270" y="343" width="1" height="2" fill="#f0e030"/><rect x="271" y="341" width="1" height="2" fill="#f0e030"/><rect x="271" y="338" width="1" height="4" fill="#f0e030"/><rect x="272" y="335" width="1" height="4" fill="#f0e030"/><rect x="272" y="335" width="1" height="6" fill="#f0e030"/><rect x="273" y="340" width="1" height="6" fill="#f0e030"/><rect x="273" y="345" width="1" height="1" fill="#f0e030"/><rect x="274" y="346" width="1" height="1" fill="#f0e030"/><rect x="274" y="342" width="1" height="5" fill="#f0e030"/><rect x="275" y="337" width="1" height="5" fill="#f0e030"/><rect x="275" y="337" width="1" height="4" fill="#f0e030"/><rect x="276" y="340" width="1" height="4" fill="#f0e030"/><rect x="276" y="336" width="1" height="7" fill="#f0e030"/><rect x="277" y="330" width="1" height="7" fill="#f0e030"/><rect x="277" y="321" width="1" height="10" fill="#f0e030"/><rect x="278" y="312" width="1" height="10" fill="#f0e030"/><rect x="278" y="312" width="1" height="12" fill="#f0e030"/><rect x="279" y="324" width="1" height="12" fill="#f0e030"/><rect x="279" y="333" width="1" height="2" fill="#f0e030"/><rect x="280" y="331" width="1" height="2" fill="#f0e030"/><rect x="280" y="331" width="1" height="4" fill="#f0e030"/><rect x="281" y="335" width="1" height="4" fill="#f0e030"/><rect x="281" y="335" width="1" height="4" fill="#f0e030"/><rect x="282" y="331" width="1" height="4" fill="#f0e030"/><rect x="282" y="331" width="1" height="2" fill="#f0e030"/><rect x="283" y="333" width="1" height="2" fill="#f0e030"/><rect x="283" y="328" width="1" height="8" fill="#f0e030"/><rect x="284" y="320" width="1" height="8" fill="#f0e030"/><rect x="284" y="320" width="1" height="8" fill="#f0e030"/><rect x="285" y="328" width="1" height="8" fill="#f0e030"/><rect x="285" y="286" width="1" height="49" fill="#f0e030"/><rect x="286" y="238" width="1" height="49" fill="#f0e030"/><rect x="286" y="238" width="1" height="49" fill="#f0e030"/><rect x="287" y="286" width="1" height="49" fill="#f0e030"/><rect x="287" y="331" width="1" height="4" fill="#f0e030"/><rect x="288" y="327" width="1" height="4" fill="#f0e030"/><rect x="288" y="327" width="1" height="4" fill="#f0e030"/><rect x="289" y="330" width="1" height="4" fill="#f0e030"/><rect x="289" y="333" width="1" height="2" fill="#f0e030"/><rect x="290" y="335" width="1" height="2" fill="#f0e030"/><rect x="290" y="331" width="1" height="6" fill="#f0e030"/><rect x="291" y="325" width="1" height="6" fill="#f0e030"/><rect x="291" y="325" width="1" height="4" fill="#f0e030"/><rect x="292" y="328" width="1" height="4" fill="#f0e030"/><rect x="292" y="323" width="1" height="8" fill="#f0e030"/><rect x="293" y="315" width="1" height="8" fill="#f0e030"/><rect x="293" y="310" width="1" height="6" fill="#f0e030"/><rect x="294" y="305" width="1" height="6" fill="#f0e030"/><rect x="294" y="290" width="1" height="15" fill="#f0e030"/><rect x="295" y="276" width="1" height="15" fill="#f0e030"/><rect x="295" y="276" width="1" height="22" fill="#f0e030"/><rect x="296" y="298" width="1" height="22" fill="#f0e030"/><rect x="296" y="308" width="1" height="13" fill="#f0e030"/><rect x="297" y="295" width="1" height="13" fill="#f0e030"/><rect x="297" y="277" width="1" height="18" fill="#f0e030"/><rect x="298" y="259" width="1" height="18" fill="#f0e030"/><rect x="298" y="259" width="1" height="24" fill="#f0e030"/><rect x="299" y="282" width="1" height="24" fill="#f0e030"/><rect x="299" y="154" width="1" height="152" fill="#f0e030"/><rect x="300" y="3" width="1" height="152" fill="#f0e030"/><rect x="300" y="3" width="1" height="82" fill="#f0e030"/><rect x="301" y="84" width="1" height="82" fill="#f0e030"/><rect x="301" y="165" width="1" height="56" fill="#f0e030"/><rect x="302" y="220" width="1" height="56" fill="#f0e030"/><rect x="302" y="185" width="1" height="90" fill="#f0e030"/><rect x="303" y="95" width="1" height="90" fill="#f0e030"/><rect x="303" y="95" width="1" height="113" fill="#f0e030"/><rect x="304" y="208" width="1" height="113" fill="#f0e030"/><rect x="304" y="320" width="1" height="8" fill="#f0e030"/><rect x="305" y="328" width="1" height="8" fill="#f0e030"/><rect x="305" y="334" width="1" height="2" fill="#f0e030"/><rect x="306" y="333" width="1" height="2" fill="#f0e030"/><rect x="306" y="330" width="1" height="4" fill="#f0e030"/><rect x="307" y="327" width="1" height="4" fill="#f0e030"/><rect x="307" y="327" width="1" height="4" fill="#f0e030"/><rect x="308" y="331" width="1" height="4" fill="#f0e030"/><rect x="308" y="331" width="1" height="4" fill="#f0e030"/><rect x="309" y="327" width="1" height="4" fill="#f0e030"/><rect x="0" y="354" width="256" height="1" fill="#e8d830"/><rect x="256" y="305" width="1" height="50" fill="#e8d830"/><rect x="0" y="71" width="309" height="1" fill="#04fb1d"/><rect x="0" y="142" width="309" height="1" fill="#04fb1d"/><rect x="0" y="213" width="309" height="1" fill="#04fb1d"/><rect x="0" y="284" width="309" height="1" fill="#04fb1d"/></svg>
<div class="t" style="left:269px;top:194px;font-size:11px;color:#3fd94a;line-height:14px;transform:scaleX(1.12);transform-origin:0 0">80</div>
<div class="t" style="left:269px;top:265px;font-size:11px;color:#3fd94a;line-height:14px;transform:scaleX(1.12);transform-origin:0 0">60</div>
<div class="t" style="left:269px;top:336px;font-size:11px;color:#3fd94a;line-height:14px;transform:scaleX(1.12);transform-origin:0 0">40</div>
<div class="t" style="left:269px;top:407px;font-size:11px;color:#3fd94a;line-height:14px;transform:scaleX(1.12);transform-origin:0 0">20</div>
<div class="t" style="left:269px;top:478px;font-size:11px;color:#3fd94a;line-height:14px;transform:scaleX(1.12);transform-origin:0 0">0</div>
<svg class="a" style="left:600px;top:135px" width="308" height="355" shape-rendering="crispEdges"><rect x="0" y="0" width="308" height="355" fill="#313031"/><rect x="15" y="0" width="1" height="355" fill="#04fb1d"/><rect x="45" y="0" width="1" height="355" fill="#04fb1d"/><rect x="75" y="0" width="1" height="355" fill="#04fb1d"/><rect x="105" y="0" width="1" height="355" fill="#04fb1d"/><rect x="135" y="0" width="1" height="355" fill="#04fb1d"/><rect x="165" y="0" width="1" height="355" fill="#04fb1d"/><rect x="195" y="0" width="1" height="355" fill="#04fb1d"/><rect x="225" y="0" width="1" height="355" fill="#04fb1d"/><rect x="255" y="0" width="1" height="355" fill="#04fb1d"/><rect x="285" y="0" width="1" height="355" fill="#04fb1d"/><polygon points="255,355 255,176 282,283 283,283 283,176 294,226 295,226 295,121 297,121 297,14 300,14 301,25 302,36 303,64 305,83 308,97 308,355" fill="#1a5cb8" stroke="#2f7ee0" stroke-width="1"/><rect x="0" y="354" width="256" height="1" fill="#1456a8"/><rect x="0" y="71" width="308" height="1" fill="#04fb1d"/><rect x="0" y="142" width="308" height="1" fill="#04fb1d"/><rect x="0" y="213" width="308" height="1" fill="#04fb1d"/><rect x="0" y="284" width="308" height="1" fill="#04fb1d"/></svg>
<div class="t" style="left:606px;top:194px;font-size:11px;color:#3fd94a;line-height:14px;transform:scaleX(1.12);transform-origin:0 0">0.4</div>
<div class="t" style="left:606px;top:265px;font-size:11px;color:#3fd94a;line-height:14px;transform:scaleX(1.12);transform-origin:0 0">0.3</div>
<div class="t" style="left:606px;top:336px;font-size:11px;color:#3fd94a;line-height:14px;transform:scaleX(1.12);transform-origin:0 0">0.2</div>
<div class="t" style="left:606px;top:407px;font-size:11px;color:#3fd94a;line-height:14px;transform:scaleX(1.12);transform-origin:0 0">0.1</div>
<div class="t" style="left:606px;top:478px;font-size:11px;color:#3fd94a;line-height:14px;transform:scaleX(1.12);transform-origin:0 0">0</div>
<svg class="a" style="left:263px;top:527px" width="309" height="355" shape-rendering="crispEdges"><rect x="0" y="0" width="309" height="355" fill="#313031"/><rect x="16" y="0" width="1" height="355" fill="#04fb1d"/><rect x="46" y="0" width="1" height="355" fill="#04fb1d"/><rect x="76" y="0" width="1" height="355" fill="#04fb1d"/><rect x="106" y="0" width="1" height="355" fill="#04fb1d"/><rect x="136" y="0" width="1" height="355" fill="#04fb1d"/><rect x="166" y="0" width="1" height="355" fill="#04fb1d"/><rect x="196" y="0" width="1" height="355" fill="#04fb1d"/><rect x="226" y="0" width="1" height="355" fill="#04fb1d"/><rect x="256" y="0" width="1" height="355" fill="#04fb1d"/><rect x="286" y="0" width="1" height="355" fill="#04fb1d"/><rect x="257" y="89" width="52" height="266" fill="#135cb0"/><rect x="257" y="80" width="52" height="9" fill="#c05810"/><polygon points="257,80 257,6 299,6 301,12 309,12 309,80" fill="#b09c10"/><polyline points="257,6.5 299,6.5 301,12.5 309,12.5" fill="none" stroke="#f0e030" stroke-width="1"/><rect x="257" y="79" width="52" height="1" fill="#e07010"/><rect x="257" y="89" width="52" height="1" fill="#5070a0"/><rect x="0" y="354" width="257" height="1" fill="#e8d830"/><rect x="256" y="179" width="1" height="176" fill="#e8d830"/><rect x="0" y="71" width="309" height="1" fill="#04fb1d"/><rect x="0" y="142" width="309" height="1" fill="#04fb1d"/><rect x="0" y="213" width="309" height="1" fill="#04fb1d"/><rect x="0" y="284" width="309" height="1" fill="#04fb1d"/></svg>
<div class="t" style="left:269px;top:586px;font-size:11px;color:#3fd94a;line-height:14px;transform:scaleX(1.12);transform-origin:0 0">361094</div>
<div class="t" style="left:269px;top:657px;font-size:11px;color:#3fd94a;line-height:14px;transform:scaleX(1.12);transform-origin:0 0">270821</div>
<div class="t" style="left:269px;top:728px;font-size:11px;color:#3fd94a;line-height:14px;transform:scaleX(1.12);transform-origin:0 0">180547</div>
<div class="t" style="left:269px;top:799px;font-size:11px;color:#3fd94a;line-height:14px;transform:scaleX(1.12);transform-origin:0 0">90273.6</div>
<div class="t" style="left:269px;top:870px;font-size:11px;color:#3fd94a;line-height:14px;transform:scaleX(1.12);transform-origin:0 0">0</div>
<svg class="a" style="left:600px;top:527px" width="308" height="355" shape-rendering="crispEdges"><rect x="0" y="0" width="308" height="355" fill="#313031"/><rect x="15" y="0" width="1" height="355" fill="#04fb1d"/><rect x="45" y="0" width="1" height="355" fill="#04fb1d"/><rect x="75" y="0" width="1" height="355" fill="#04fb1d"/><rect x="105" y="0" width="1" height="355" fill="#04fb1d"/><rect x="135" y="0" width="1" height="355" fill="#04fb1d"/><rect x="165" y="0" width="1" height="355" fill="#04fb1d"/><rect x="195" y="0" width="1" height="355" fill="#04fb1d"/><rect x="225" y="0" width="1" height="355" fill="#04fb1d"/><rect x="255" y="0" width="1" height="355" fill="#04fb1d"/><rect x="285" y="0" width="1" height="355" fill="#04fb1d"/><rect x="0" y="354" width="308" height="1" fill="#104c98"/><rect x="256" y="353" width="52" height="2" fill="#1458b0"/><rect x="0" y="71" width="308" height="1" fill="#04fb1d"/><rect x="0" y="142" width="308" height="1" fill="#04fb1d"/><rect x="0" y="213" width="308" height="1" fill="#04fb1d"/><rect x="0" y="284" width="308" height="1" fill="#04fb1d"/></svg>
<div class="t" style="left:606px;top:586px;font-size:11px;color:#3fd94a;line-height:14px;transform:scaleX(1.12);transform-origin:0 0">719680</div>
<div class="t" style="left:606px;top:657px;font-size:11px;color:#3fd94a;line-height:14px;transform:scaleX(1.12);transform-origin:0 0">539760</div>
<div class="t" style="left:606px;top:728px;font-size:11px;color:#3fd94a;line-height:14px;transform:scaleX(1.12);transform-origin:0 0">359840</div>
<div class="t" style="left:606px;top:799px;font-size:11px;color:#3fd94a;line-height:14px;transform:scaleX(1.12);transform-origin:0 0">179920</div>
<div class="t" style="left:606px;top:870px;font-size:11px;color:#3fd94a;line-height:14px;transform:scaleX(1.12);transform-origin:0 0">0</div>
<div class="a" style="left:707px;top:343px;width:139px;height:19px;border:1px solid #000;background:#ffffdc"></div>
<div class="t" style="left:711px;top:344px;line-height:17px">localhost:cpu/loadavg1</div>
<div class="a" style="left:6px;top:906px;width:107px;height:19px;border:1px solid;border-color:#a4a4a4 #c4c4c4 #c4c4c4 #a4a4a4;background:#efefef;text-align:center;line-height:17px;letter-spacing:0.1px">107 процессов</div>
<div class="a" style="left:116px;top:906px;width:410px;height:19px;border:1px solid;border-color:#a4a4a4 #c4c4c4 #c4c4c4 #a4a4a4;background:#efefef;text-align:center;line-height:17px;letter-spacing:0.17px">Память: 436.732 KB использовано, 14.636 KB свободно</div>
<div class="a" style="left:529px;top:906px;width:395px;height:19px;border:1px solid;border-color:#a4a4a4 #c4c4c4 #c4c4c4 #a4a4a4;background:#efefef;text-align:center;line-height:17px;letter-spacing:0.14px">Подкачка: 2.720 KB использовано, 896.880 KB свободно</div>
</body></html>
